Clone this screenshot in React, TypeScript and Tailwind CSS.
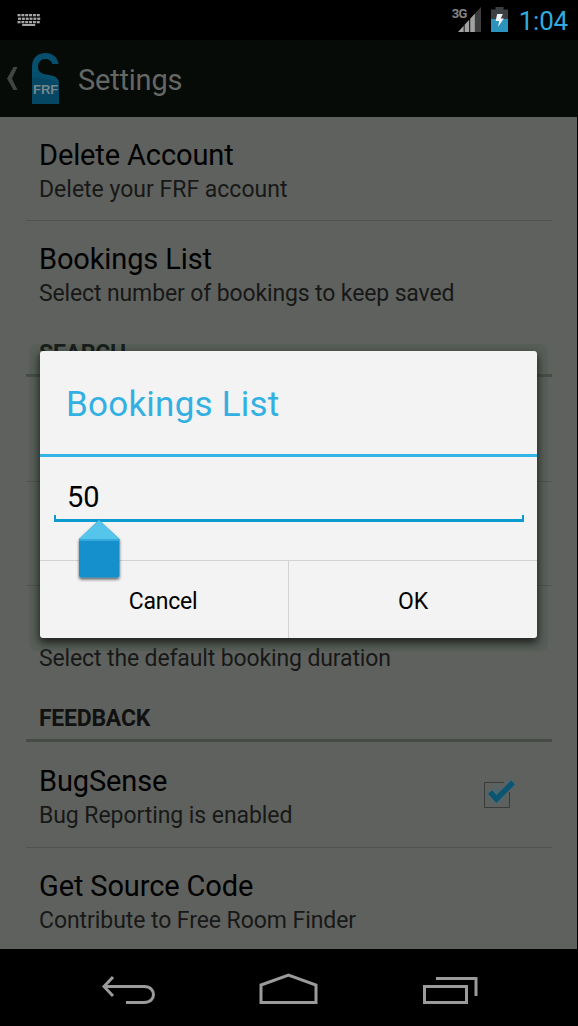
import type { ReactNode } from "react";

function KeyboardIcon() {
  const rows = [
    { y: 0, x: 0.5 },
    { y: 3.6, x: 1 },
    { y: 7, x: 0.5 },
  ];
  return (
    <svg className="h-3 w-6" viewBox="0 0 24 12" fill="#a6a6a6">
      {rows.map((row) =>
        [0, 1, 2, 3, 4, 5].map((i) => (
          <rect key={`${row.y}-${i}`} x={row.x + i * 3.85} y={row.y} width="3" height="2.3" />
        )),
      )}
      <rect x="5.2" y="10" width="13" height="2" />
    </svg>
  );
}

function SignalIcon() {
  return (
    <svg className="h-[27px] w-[31px]" viewBox="0 0 31 27">
      <path d="M30 2V27H24V8.500Z" fill="#3e3e3e" />
      <path d="M7 27L12.700 20.800V27ZM13.600 19.800L18.200 14.800V27H13.600ZM19.200 13.800L23.900 8.600V27H19.200Z" fill="#a2a2a2" />
    </svg>
  );
}

function BatteryIcon() {
  return (
    <svg className="h-[25px] w-[17px]" viewBox="0 0 17 25">
      <path d="M0 2.500H4.500V0H12.500V2.500H17V25H0Z" fill="#3d4042" />
      <path d="M0 12H17V25H0Z" fill="#2b93bd" />
      <path d="M6.200 7H11.800L9.800 11.500H12.800L7 20L8.200 14H4.600Z" fill="#f0f4f6" />
    </svg>
  );
}

function DoorTagIcon() {
  return (
    <svg className="h-[51px] w-[27px]" viewBox="0 0 27 51">
      <path
        d="M0 51V14C0 5 5.500 0 13.500 0C20.500 0 25.500 4 26.600 11H20.500C19.500 8 17 6 13.500 6C9 6 6 9.500 6 14C6 18.500 9.500 20.800 14.500 21.500C22 22.500 27 24 27 31V51Z"
        fill="#064f6d"
      />
      <path d="M0 25C10 24 19 26 27 31V51H0Z" fill="#064863" />
    </svg>
  );
}

function CheckBox() {
  return (
    <svg className="h-8 w-9" viewBox="0 0 36 32">
      <defs>
        <radialGradient id="glow">
          <stop offset="0" stopColor="#3f6c7c" stopOpacity="0.7" />
          <stop offset="1" stopColor="#3f6c7c" stopOpacity="0" />
        </radialGradient>
      </defs>
      <path d="M22 4.500H2.500V29.500H27.500V14" fill="none" stroke="#393b39" />
      <circle cx="15" cy="17" r="12" fill="url(#glow)" />
      <circle cx="28" cy="6" r="7" fill="url(#glow)" />
      <path d="M8 14L14.500 21L31 4.500" fill="none" stroke="#0a5571" strokeWidth="5.400" />
    </svg>
  );
}

function Preference({
  title,
  summary,
  className = "h-[104px] border-b",
  summaryTracking = "tracking-[-0.07px]",
  children,
}: {
  title?: ReactNode;
  summary?: ReactNode;
  className?: string;
  summaryTracking?: string;
  children?: ReactNode;
}) {
  return (
    <div className={`flex justify-between border-[#525152] px-[13px] ${className}`}>
      <div className="pt-[21px]">
        <div className="h-[34px] text-[29px] leading-[34px] tracking-[-0.12px] whitespace-nowrap text-black">
          {title}
        </div>
        <div className={`mt-1 text-[23px] leading-[27px] whitespace-nowrap text-[#171817] ${summaryTracking}`}>
          {summary}
        </div>
      </div>
      {children}
    </div>
  );
}

function SectionHeader({ children }: { children: ReactNode }) {
  return (
    <div className="mb-px h-[52px] border-b-[3px] border-[#464b46] px-[13px] pt-[15px] text-[23px] leading-[27px] font-bold tracking-[-0.25px] text-[#101110]">
      {children}
    </div>
  );
}

function Dialog() {
  return (
    <div className="absolute top-[344px] left-[29px] h-[307px] w-[519px] rounded-lg bg-[#3c5a46]/20 px-[11px] pt-[7px]">
      <div className="flex h-[287px] w-[497px] flex-col rounded-[3px] bg-[#f3f3f3] shadow-[0_4px_9px_1px_rgba(0,0,0,0.65)]">
        <h2 className="h-[106px] shrink-0 border-b-[3px] border-[#33b5e5] pt-[33px] pl-[26px] text-[35px] leading-[42px] font-normal tracking-[0.22px] text-[#33b0e2]">
          Bookings List
        </h2>
        <div className="relative h-[103px] shrink-0 px-[14px] pt-[22px]">
          <div className="pl-[13px] text-[29px] leading-[36px] text-black">50</div>
          <div className="h-[7px] w-[470px] border-x-2 border-b-[3px] border-[#0c9bcf]" />
          <svg className="absolute top-[62px] left-[35px] h-[66px] w-12" viewBox="0 0 48 66">
            <defs>
              <filter id="handle" x="-20%" y="-20%" width="140%" height="140%">
                <feDropShadow dx="0" dy="2" stdDeviation="1.500" floodOpacity="0.6" />
              </filter>
            </defs>
            <g filter="url(#handle)">
              <path d="M24 1L44.500 20V56Q44.500 58.500 42 58.500H6.500Q4 58.500 4 56V20Z" fill="#178fcd" />
              <path d="M24 1L44.500 20H4Z" fill="#57c5eb" />
              <path d="M4 20H44.500V22H4Z" fill="#35a9dc" />
            </g>
          </svg>
        </div>
        <div className="flex flex-1 border-t border-[#d2d2d2] text-[23px] tracking-[-0.25px] text-black">
          <button className="w-[249px] shrink-0 border-r border-[#d2d2d2] pt-[5px] pr-0.5">Cancel</button>
          <button className="flex-1 pt-[5px]">OK</button>
        </div>
      </div>
    </div>
  );
}

export default function App() {
  return (
    <div className="relative h-[1026px] w-[578px] overflow-hidden bg-black font-[Roboto,sans-serif]">
      <div className="flex h-10 items-start justify-between pr-[10px] pl-[17px]">
        <div className="pt-[14px]">
          <KeyboardIcon />
        </div>
        <div className="flex items-start">
          <div className="relative pt-[5px]">
            <SignalIcon />
            <span className="absolute top-[6px] left-px text-[13px] leading-4 font-bold tracking-[-0.6px] text-[#858585]">3G</span>
          </div>
          <div className="pt-[7px] pl-[9px]">
            <BatteryIcon />
          </div>
          <span className="pt-[5px] pl-[11px] text-[26px] leading-[32px] tracking-[-0.2px] text-[#32abdc]">1:04</span>
        </div>
      </div>

      <header className="flex h-[77px] items-start bg-[#060b07]">
        <svg className="mt-[26px] ml-[6px] h-[25px] w-3" viewBox="0 0 12 25">
          <path d="M7.500 1H11.500L6 12.500L11.500 24H7.500L1 12.500Z" fill="#424442" />
        </svg>
        <div className="relative mt-[13px] ml-[14px]">
          <DoorTagIcon />
          <span className="absolute top-[29px] left-px font-['Liberation_Sans',sans-serif] text-[13px] leading-4 font-bold text-[#78868a]">
            FRF
          </span>
        </div>
        <h1 className="pt-[23px] pl-[19px] text-[29px] leading-[34px] font-normal tracking-[-0.2px] text-[#656765]">Settings</h1>
      </header>

      <main className="h-[832px] w-[577px] overflow-hidden bg-[#5f615e] pr-[25px] pl-[26px]">
        <Preference title="Delete Account" summary="Delete your FRF account" summaryTracking="tracking-normal" />
        <Preference
          title="Bookings List"
          summary="Select number of bookings to keep saved"
          summaryTracking="tracking-[-0.13px]"
          className="h-[104px]"
        />
        <SectionHeader>SEARCH</SectionHeader>
        <Preference />
        <Preference />
        <Preference
          summary="Select the default booking duration"
          summaryTracking="tracking-[-0.13px]"
          className="h-[104px]"
        />
        <SectionHeader>FEEDBACK</SectionHeader>
        <Preference title="BugSense" summary="Bug Reporting is enabled" className="h-[105px] border-b">
          <div className="pt-[35px] pr-[21px]">
            <CheckBox />
          </div>
        </Preference>
        <Preference title="Get Source Code" summary="Contribute to Free Room Finder" className="h-[104px]" />
      </main>

      <nav className="flex h-[77px] pt-[22px] pl-[101px]">
        <svg className="h-10 w-[55px]" viewBox="0 0 55 40" fill="none" stroke="#9b9b9b" strokeWidth="3">
          <path d="M12 6L3 15.500L12 25M3 15.500H43C50 15.500 52.500 20 52.500 23.500S50 31.500 43 31.500H25" />
        </svg>
        <svg className="ml-[103px] h-10 w-[60px]" viewBox="0 0 60 40" fill="none" stroke="#9b9b9b" strokeWidth="3">
          <path d="M2 14L29.500 4L57 14V31.500H2Z" />
        </svg>
        <svg className="ml-[103px] h-10 w-[58px]" viewBox="0 0 58 40" fill="none" stroke="#9b9b9b" strokeWidth="3">
          <path d="M2.500 15.500H44.500V31.500H2.500ZM14 7.500H54V25" />
        </svg>
      </nav>

      <Dialog />
    </div>
  );
}
